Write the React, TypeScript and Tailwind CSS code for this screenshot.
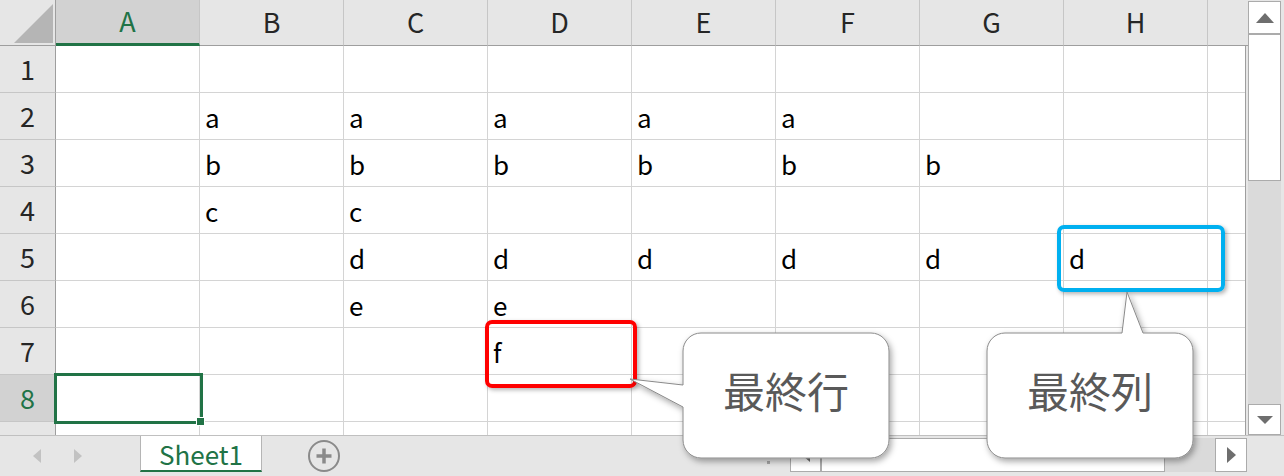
const cols = ['A', 'B', 'C', 'D', 'E', 'F', 'G', 'H']

const data: Record<number, Record<string, string>> = {
  2: { B: 'a', C: 'a', D: 'a', E: 'a', F: 'a' },
  3: { B: 'b', C: 'b', D: 'b', E: 'b', F: 'b', G: 'b' },
  4: { B: 'c', C: 'c' },
  5: { C: 'd', D: 'd', E: 'd', F: 'd', G: 'd', H: 'd' },
  6: { C: 'e', D: 'e' },
  7: { D: 'f' },
}

const rows = [1, 2, 3, 4, 5, 6, 7, 8, 9]

function HeaderRow() {
  return (
    <div className="flex h-[46px] w-[1248px] shrink-0">
      {/* corner */}
      <div className="relative w-[56px] h-full border-r border-b border-[#9e9e9e] bg-[#e6e6e6]">
        <svg className="absolute left-0 top-0" width="56" height="46">
          <polygon points="14,43 53,4 53,43" fill="#b5b5b5" />
        </svg>
      </div>
      {cols.map((c) => (
        <div
          key={c}
          className={
            c === 'A'
              ? 'w-[144px] h-full flex items-center justify-center bg-[#d2d2d2] border-r border-[#c6c6c6] border-b-[3px] border-b-[#217346] text-[27px] text-[#217346]'
              : 'w-[144px] h-full flex items-center justify-center bg-[#e6e6e6] border-r border-[#c6c6c6] border-b border-b-[#9e9e9e] text-[27px] text-[#262626]'
          }
        >
          {c}
        </div>
      ))}
      <div className="flex-1 h-full bg-[#e6e6e6] border-b border-[#9e9e9e]" />
    </div>
  )
}

function GridRow({ n }: { n: number }) {
  const sel = n === 8
  return (
    <div className="flex h-[47px] shrink-0">
      <div
        className={
          sel
            ? 'w-[56px] h-full flex items-center justify-center bg-[#d2d2d2] border-r border-r-[#9e9e9e] border-b border-b-[#c6c6c6] text-[27px] text-[#217346]'
            : 'w-[56px] h-full flex items-center justify-center bg-[#e6e6e6] border-r border-r-[#9e9e9e] border-b border-b-[#c6c6c6] text-[27px] text-[#262626]'
        }
      >
        {n}
      </div>
      {cols.map((c) => (
        <div
          key={c}
          className="w-[144px] h-full flex items-center pl-[5px] bg-white border-r border-b border-[#d4d4d4] text-[26px] text-black"
        >
          {data[n]?.[c] ?? ''}
        </div>
      ))}
      <div className="flex-1 h-full bg-white border-b border-[#d4d4d4]" />
    </div>
  )
}

function VScroll() {
  return (
    <div className="w-[33px] flex flex-col pt-[1px] bg-[#e6e6e6]">
      <div className="h-[33px] bg-white border border-[#ababab] flex items-center justify-center">
        <svg width="18" height="10">
          <polygon points="0,10 9,0 18,10" fill="#6e6e6e" />
        </svg>
      </div>
      <div className="flex-1 flex flex-col bg-[#dadada]">
        <div className="h-[147px] bg-white border border-[#ababab]" />
      </div>
      <div className="h-[31px] bg-white border border-[#ababab] flex items-center justify-center">
        <svg width="16" height="8">
          <polygon points="0,0 16,0 8,8" fill="#6e6e6e" />
        </svg>
      </div>
    </div>
  )
}

function BottomBar() {
  return (
    <div className="flex h-[41px] border-t border-[#c0c0c0] bg-[#e6e6e6]">
      {/* sheet nav */}
      <div className="w-[140px] flex items-center pl-[33px]">
        <svg width="8" height="14">
          <polygon points="8,0 0,7 8,14" fill="#c2c2c2" />
        </svg>
        <svg className="ml-[33px]" width="8" height="14">
          <polygon points="0,0 8,7 0,14" fill="#c2c2c2" />
        </svg>
      </div>

      {/* tab */}
      <div className="w-[122px] h-[36px] bg-white border-x border-[#b5b5b5] border-b-2 border-b-[#217346] flex items-center justify-center text-[26px] text-[#217346]">
        Sheet1
      </div>

      {/* new sheet */}
      <div className="ml-[46px] flex items-center">
        <svg width="32" height="32" viewBox="0 0 32 32">
          <circle cx="16" cy="16" r="15" fill="none" stroke="#8a8a8a" strokeWidth="2" />
          <path d="M16 8.5v15M8.5 16h15" stroke="#8a8a8a" strokeWidth="3.5" />
        </svg>
      </div>

      {/* split handle */}
      <div className="ml-[427px] flex items-center pt-[12px]">
        <div className="w-[3px] h-[3px] bg-[#a6a6a6]" />
      </div>

      {/* horizontal scrollbar */}
      <div className="ml-[20px] mt-[2px] h-[34px] w-[457px] flex bg-[#dadada]">
        <div className="w-[31px] h-full bg-white border border-[#ababab] flex items-center justify-center">
          <svg width="8" height="14">
            <polygon points="8,0 0,7 8,14" fill="#6e6e6e" />
          </svg>
        </div>
        <div className="w-[344px] h-full bg-white border border-[#ababab]" />
        <div className="flex-1" />
        <div className="w-[32px] h-full bg-white border border-[#ababab] flex items-center justify-center">
          <svg width="9" height="16">
            <polygon points="0,0 9,8 0,16" fill="#6e6e6e" />
          </svg>
        </div>
      </div>
    </div>
  )
}

function Callouts() {
  return (
    <>
      <svg className="absolute left-0 top-0 pointer-events-none" width="1284" height="476">
        <defs>
          <filter id="sh" x="-20%" y="-20%" width="140%" height="140%">
            <feDropShadow dx="2" dy="3" stdDeviation="3" floodColor="#000" floodOpacity="0.35" />
          </filter>
        </defs>
        <path
          d="M701 333H871A18 18 0 0 1 889 351V440A18 18 0 0 1 871 458H701A18 18 0 0 1 683 440V407L630 379L683 385V351A18 18 0 0 1 701 333Z"
          fill="#fff"
          stroke="#8a8a8a"
          strokeWidth="1"
          filter="url(#sh)"
        />
        <path
          d="M1005 333H1122L1127 292L1143 333H1175A18 18 0 0 1 1193 351V440A18 18 0 0 1 1175 458H1005A18 18 0 0 1 987 440V351A18 18 0 0 1 1005 333Z"
          fill="#fff"
          stroke="#8a8a8a"
          strokeWidth="1"
          filter="url(#sh)"
        />
      </svg>
      <div className="absolute left-[683px] top-[333px] w-[206px] h-[125px] flex items-center justify-center pb-[12px] text-[42px] text-[#595959]">
        最終行
      </div>
      <div className="absolute left-[987px] top-[333px] w-[206px] h-[125px] flex items-center justify-center pb-[12px] text-[42px] text-[#595959]">
        最終列
      </div>
    </>
  )
}

export default function App() {
  return (
    <div className="relative w-[1284px] h-[476px] overflow-hidden bg-[#e6e6e6] font-['Noto_Sans_CJK_JP','Noto_Sans',sans-serif]">
      <div className="flex h-[435px]">
        <div className="w-[1248px] flex flex-col">
          <HeaderRow />
          <div className="w-[1246px] flex-1 flex flex-col overflow-hidden border-r border-[#9e9e9e]">
            {rows.map((n) => (
              <GridRow key={n} n={n} />
            ))}
          </div>
        </div>
        <VScroll />
      </div>
      <BottomBar />

      {/* active cell A8 */}
      <div className="absolute left-[54px] top-[373px] w-[149px] h-[51px] border-[3px] border-[#217346]" />
      <div className="absolute left-[196px] top-[417px] w-[9px] h-[9px] bg-[#217346] border border-white" />

      {/* highlight boxes */}
      <div className="absolute left-[485px] top-[320px] w-[152px] h-[68px] rounded-[7px] border-4 border-[#ff0000] shadow-[2px_2px_4px_rgba(0,0,0,0.3)]" />
      <div className="absolute left-[1057px] top-[225px] w-[168px] h-[67px] rounded-[7px] border-4 border-[#00b0f0] shadow-[2px_2px_4px_rgba(0,0,0,0.3)]" />

      <Callouts />
    </div>
  )
}
